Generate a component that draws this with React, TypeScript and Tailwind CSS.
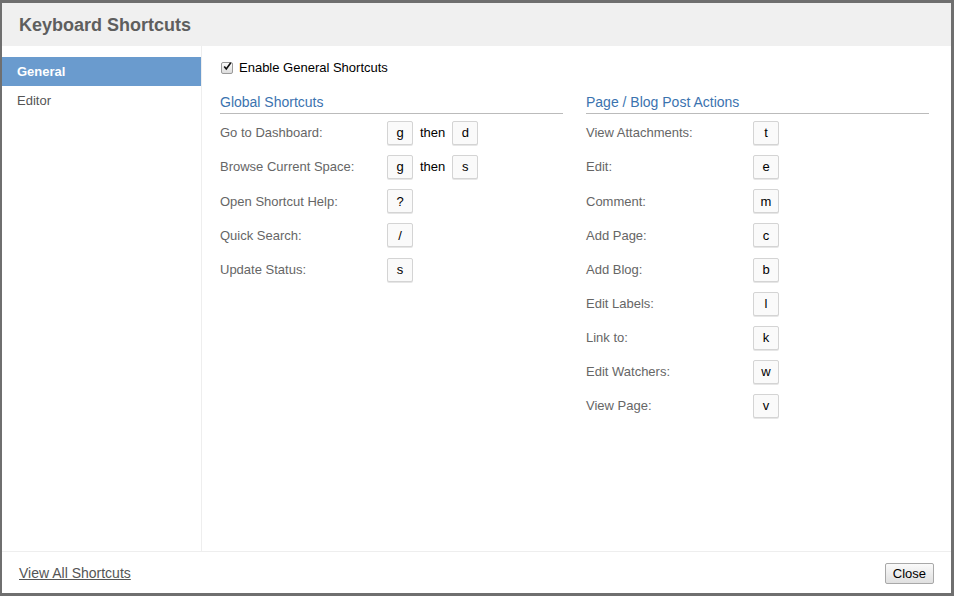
import React from "react";

const Key = ({ k }: { k: string }) => (
  <span className="inline-flex h-[24px] w-[26px] items-center justify-center rounded-[2px] border border-[#d4d4d4] bg-[#fafafa] text-[13px] text-black shadow-[0_1px_0_#e6e6e6]">
    {k}
  </span>
);

type Row = { label: string; keys: string[] };

const global: Row[] = [
  { label: "Go to Dashboard:", keys: ["g", "d"] },
  { label: "Browse Current Space:", keys: ["g", "s"] },
  { label: "Open Shortcut Help:", keys: ["?"] },
  { label: "Quick Search:", keys: ["/"] },
  { label: "Update Status:", keys: ["s"] },
];

const page: Row[] = [
  { label: "View Attachments:", keys: ["t"] },
  { label: "Edit:", keys: ["e"] },
  { label: "Comment:", keys: ["m"] },
  { label: "Add Page:", keys: ["c"] },
  { label: "Add Blog:", keys: ["b"] },
  { label: "Edit Labels:", keys: ["l"] },
  { label: "Link to:", keys: ["k"] },
  { label: "Edit Watchers:", keys: ["w"] },
  { label: "View Page:", keys: ["v"] },
];

const Section = ({ title, rows }: { title: string; rows: Row[] }) => (
  <div className="flex w-[343px] flex-col">
    <div className="border-b border-[#bbbbbb] pb-[2px] text-[14px] leading-[17px] text-[#3b73af]">
      {title}
    </div>
    <div className="mt-[7px] flex flex-col gap-[10.13px]">
      {rows.map((r) => (
        <div key={r.label} className="flex h-[24px] items-center">
          <span className="w-[167px] text-[13px] text-[#666666]">{r.label}</span>
          {r.keys.length === 2 ? (
            <span className="flex items-center gap-[7px]">
              <Key k={r.keys[0]} />
              <span className="text-[13px] text-black">then</span>
              <Key k={r.keys[1]} />
            </span>
          ) : (
            <Key k={r.keys[0]} />
          )}
        </div>
      ))}
    </div>
  </div>
);

export default function App() {
  return (
    <div
      className="h-[596px] w-[954px] overflow-hidden border-b-[3px] border-l-[2px] border-r-[3px] border-t-[3px] border-[#6f6f6f] bg-white"
      style={{ fontFamily: '"Liberation Sans", Arial, sans-serif' }}
    >
      <div className="flex h-full flex-col">
        <div className="flex h-[43px] shrink-0 items-center bg-[#f0f0f0] pl-[17px] pt-[2px]">
          <span className="text-[18px] font-bold text-[#5e5e5e]">Keyboard Shortcuts</span>
        </div>
        <div className="flex min-h-0 flex-1">
          <div className="w-[200px] shrink-0 border-r border-[#eeeeee] pt-[11px]">
            <div className="flex h-[29px] items-center bg-[#6a9bce] pl-[15px] text-[13px] font-bold text-white">
              General
            </div>
            <div className="flex h-[29px] items-center pl-[15px] text-[13px] text-[#555555]">
              Editor
            </div>
          </div>
          <div className="flex-1 pl-[18px] pt-[12px]">
            <div className="flex h-[20px] items-center">
              <span className="ml-[1px] mr-[6px] flex h-[12px] w-[12px] items-center justify-center rounded-[2px] border border-[#9a9a9a] bg-gradient-to-b from-[#fdfdfd] to-[#dcdcdc]">
                <svg width="11" height="11" viewBox="0 0 11 11" className="-mt-[3px] ml-[1px]">
                  <path d="M1.5 5.5 L4 8.5 L9.5 1" fill="none" stroke="#111" strokeWidth="2" />
                </svg>
              </span>
              <span className="text-[13px] text-black">Enable General Shortcuts</span>
            </div>
            <div className="mt-[16px] flex gap-[23px]">
              <Section title="Global Shortcuts" rows={global} />
              <Section title="Page / Blog Post Actions" rows={page} />
            </div>
          </div>
        </div>
        <div className="flex h-[42px] shrink-0 items-center justify-between border-t border-[#eeeeee] pl-[17px] pr-[17px] pt-[2px]">
          <span className="text-[14px] text-[#555555] underline">View All Shortcuts</span>
          <button className="h-[21px] rounded-[2px] border border-[#a8a8a8] bg-gradient-to-b from-[#fafafa] to-[#e0e0e0] px-[7px] text-[13px] leading-[18px] text-black">
            Close
          </button>
        </div>
      </div>
    </div>
  );
}
